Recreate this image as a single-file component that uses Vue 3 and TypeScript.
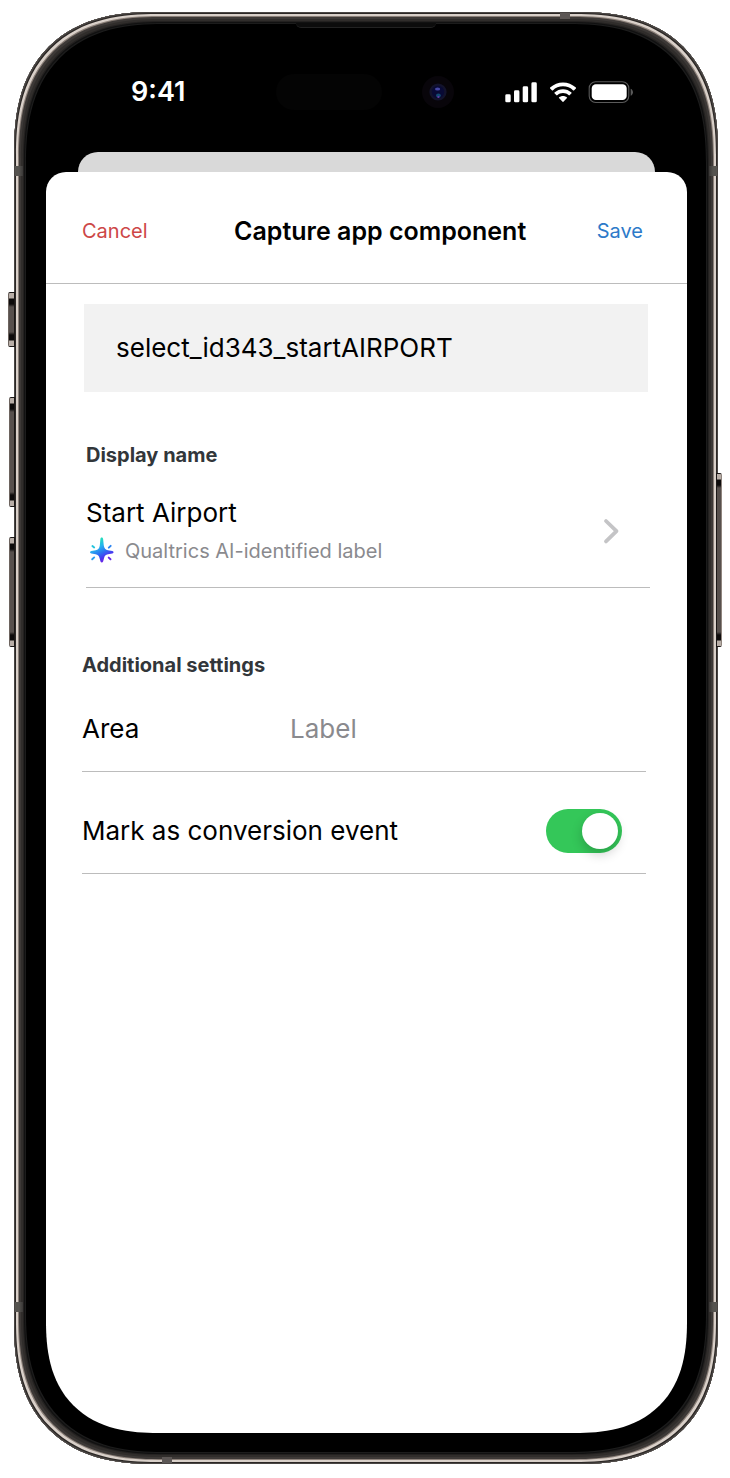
<script setup lang="ts">
import { ref } from 'vue'

const componentId = 'select_id343_startAIRPORT'
const displayName = ref<string>('Start Airport')
const area = ref<string>('')
const isConversion = ref<boolean>(true)
</script>

<template>
  <div class="page">
    <div class="phone">
      <span class="key key-action"></span>
      <span class="key key-up"></span>
      <span class="key key-down"></span>
      <span class="key key-power"></span>
      <span class="band band-left-top"></span>
      <span class="band band-right-top"></span>
      <span class="band band-left-bottom"></span>
      <span class="band band-right-bottom"></span>
      <span class="band band-top"></span>
      <span class="band band-bottom"></span>
      <span class="speaker"></span>

      <div class="status">
        <span class="time">9:41</span>
        <div class="island">
          <span class="pill"></span>
          <svg class="camera" viewBox="0 0 32 32" aria-hidden="true">
            <circle cx="16" cy="16" r="16" fill="#08050a" />
            <circle cx="16" cy="16" r="8.6" fill="#13132c" />
            <circle cx="16" cy="16" r="6.2" fill="#090a35" />
            <ellipse cx="15.6" cy="13" rx="2.6" ry="1.6" fill="#4647a4" />
            <ellipse cx="16.4" cy="19.6" rx="2.4" ry="2" fill="#124a72" />
            <circle cx="16.4" cy="21" r="1.1" fill="#6a3aa8" />
          </svg>
        </div>
        <svg class="indicators" viewBox="0 0 128 24" aria-hidden="true">
          <g fill="#fff">
            <rect x="0.3" y="14.3" width="5.4" height="8" rx="1.4" />
            <rect x="9" y="10.3" width="5.4" height="12" rx="1.4" />
            <rect x="17.7" y="6.3" width="5.4" height="16" rx="1.4" />
            <rect x="26.4" y="2.3" width="5.4" height="20" rx="1.4" />
            <path d="M58 6.3c3.9 0 7.500 1.500 10.200 4.100.2.200.5.200.7 0l2-2c.2-.2.2-.5 0-.8-7.200-6.900-18.600-6.900-25.800 0-.2.200-.2.600 0 .8l2 2c.2.200.5.200.7 0 2.700-2.600 6.300-4.100 10.200-4.100z" />
            <path d="M58 13c2.100 0 4.200.8 5.800 2.300.2.200.5.200.7 0l2-2c.2-.2.2-.6 0-.8-4.800-4.500-12.200-4.500-17 0-.2.200-.2.600 0 .8l2 2c.2.200.5.200.7 0C53.800 13.800 55.900 13 58 13z" />
            <path d="M62 17.400c.2.200.2.500 0 .7l-3.600 3.600c-.2.300-.6.300-.8 0L54 18.100c-.2-.2-.2-.5 0-.7 2.300-2 5.700-2 8 0z" />
            <rect x="86.700" y="4.300" width="35" height="15.800" rx="4.200" />
          </g>
          <rect x="84.200" y="1.800" width="39.600" height="20.700" rx="6.500" fill="none" stroke="#5a5a5a" stroke-width="1.100" />
          <path d="M125.700 8.700v7c1.400-.6 2.300-2 2.300-3.500s-.9-2.900-2.300-3.500z" fill="#5a5a5a" />
        </svg>
      </div>

      <div class="backdrop"></div>

      <main class="sheet">
        <header class="bar">
          <button type="button" class="action cancel">Cancel</button>
          <h1 class="title">Capture app component</h1>
          <button type="button" class="action save">Save</button>
        </header>

        <div class="identifier">{{ componentId }}</div>

        <section class="display">
          <h2 class="heading">Display name</h2>
          <button type="button" class="name">
            <span class="name-text">
              <span class="value">{{ displayName }}</span>
              <span class="source">
                <svg class="spark" viewBox="0 0 26 28" aria-hidden="true">
                  <defs>
                    <linearGradient id="spark-fill" gradientUnits="userSpaceOnUse" x1="8" y1="3" x2="19" y2="24">
                      <stop offset="0" stop-color="#22e0b8" />
                      <stop offset="0.300" stop-color="#27b4ee" />
                      <stop offset="0.550" stop-color="#2b74f2" />
                      <stop offset="0.780" stop-color="#4a35f0" />
                      <stop offset="1" stop-color="#7a1ee0" />
                    </linearGradient>
                  </defs>
                  <path fill="url(#spark-fill)" d="M12.700.5c.9 0 1.300.7 1.400 1.500l.7 6.500c.4 2.800 1.600 4.200 4.200 4.700l4.300.9c1.700.4 1.700 2 0 2.400l-4.300.7c-2.500.5-3.400 1.500-3.900 3.700l-1 3.500c-.4 1.500-2.200 1.500-2.600 0l-1-3.500c-.5-2.200-1.600-3.300-3.900-3.700l-4.300-.7c-1.700-.4-1.700-2 0-2.400l4.300-.9c2.600-.5 3.800-1.900 4.200-4.700l.6-6.500c.1-.8.4-1.500 1.300-1.500z" />
                  <g fill="none" stroke-width="1.900" stroke-linecap="round">
                    <path stroke="#25c4dd" d="M3.400 9l1.800 1.500" />
                    <path stroke="#2a84f2" d="M21.700 8.800l-1.900 1.900" />
                    <path stroke="#2a9df0" d="M3.200 22.300l2-1.900" />
                    <path stroke="#6a26e6" d="M21.500 22.300l-1.800-1.700" />
                  </g>
                </svg>
                Qualtrics AI-identified label
              </span>
            </span>
            <svg class="chevron" viewBox="0 0 18 28" aria-hidden="true">
              <path d="M4 4l10.500 10.200-10.500 10.200" fill="none" stroke="#c4c4c6" stroke-width="3.800" stroke-linecap="round" stroke-linejoin="round" />
            </svg>
          </button>
        </section>

        <section class="settings">
          <h2 class="heading">Additional settings</h2>
          <div class="row">
            <label class="area-label" for="area">Area</label>
            <input id="area" v-model="area" class="area-input" type="text" placeholder="Label" />
          </div>
          <div class="row">
            <label for="conversion">Mark as conversion event</label>
            <input id="conversion" v-model="isConversion" class="switch" type="checkbox" role="switch" />
          </div>
        </section>
      </main>
    </div>
  </div>
</template>

<style>
body {
  background: #fff;
}
</style>

<style scoped>
.page {
  box-sizing: border-box;
  min-height: 100vh;
  padding: 12px 12px 14px 14px;
  display: flex;
  font-family: Inter, "Liberation Sans", sans-serif;
  color: #000;
}

.phone {
  position: relative;
  box-sizing: border-box;
  flex: 1;
  min-width: 0;
  display: flex;
  flex-direction: column;
  padding: 0 31px 31px 32px;
  border-radius: 122px;
  background: #000;
  box-shadow:
    inset 0 0 0 1px #4a4644,
    inset 0 0 0 2px #2b2725,
    inset 0 0 0 4px #d9d0c9,
    inset 0 0 0 5px #8a7f78,
    inset 0 0 0 7px #3d3937,
    inset 0 0 0 9px #302d2b,
    inset 0 0 0 10px #232120,
    inset 0 0 0 11px #111,
    inset 0 0 0 12px #1c1c1c;
}

.key {
  position: absolute;
  box-sizing: border-box;
  left: -5px;
  width: 6px;
  height: 110px;
  border: 1px solid #1a1716;
  border-left-color: #6d645f;
  border-radius: 2px 0 0 2px;
  background: linear-gradient(#b8aea7 0 5px, #0d0b0b 6px 11px, #57504d 14px calc(100% - 14px), #0d0b0b calc(100% - 11px) calc(100% - 6px), #b8aea7 calc(100% - 5px));
}

.key-action {
  top: 280px;
  left: -6px;
  width: 7px;
  height: 55px;
}

.key-up {
  top: 385px;
}

.key-down {
  top: 525px;
}

.key-power {
  top: 461px;
  left: auto;
  right: -4px;
  height: 174px;
  border-left-color: #1a1716;
  border-right-color: #8f857e;
  border-radius: 0 2px 2px 0;
}

.band {
  position: absolute;
  width: 8px;
  height: 10px;
  background: linear-gradient(to right, #55534f 0 4px, #3a3837);
}

.band-left-top {
  top: 154px;
  left: 1px;
}

.band-right-top {
  top: 154px;
  right: 1px;
  background: linear-gradient(to left, #55534f 0 4px, #3a3837);
}

.band-left-bottom {
  bottom: 152px;
  left: 1px;
}

.band-right-bottom {
  bottom: 152px;
  right: 1px;
  background: linear-gradient(to left, #55534f 0 4px, #3a3837);
}

.band-top {
  top: 1px;
  right: 148px;
  width: 10px;
  height: 6px;
  background: #5c5755;
}

.band-bottom {
  bottom: 1px;
  left: 148px;
  width: 10px;
  height: 6px;
  background: #5c5755;
}

.speaker {
  position: absolute;
  top: 11px;
  left: 40%;
  width: 20%;
  height: 5px;
  border-bottom: 1px solid #222;
  border-radius: 0 0 5px 5px;
  box-sizing: border-box;
  background: #0c0c0c;
}

.status {
  box-sizing: border-box;
  height: 140px;
  padding: 20px 54px 0 85px;
  display: flex;
  align-items: center;
}

.time {
  flex: 1;
  color: #fff;
  font-size: 27px;
  line-height: 32px;
  font-weight: 600;
}

.island {
  display: flex;
  align-items: center;
  gap: 40px;
  margin-right: 51px;
}

.pill {
  width: 106px;
  height: 36px;
  border-radius: 18px;
  background: #040404;
}

.camera {
  width: 32px;
  height: 32px;
}

.indicators {
  width: 128px;
  height: 24px;
}

.backdrop {
  height: 20px;
  margin: 0 32px;
  border-radius: 20px 20px 0 0;
  background: #d9d9d9;
}

.sheet {
  flex: 1;
  border-radius: 20px 20px 94px 94px;
  background: #fff;
  font-size: 26px;
  line-height: 36px;
}

@supports (corner-shape: superellipse(1.3)) {
  .phone {
    border-radius: 142px;
    corner-shape: superellipse(1.3);
  }

  .sheet {
    border-radius: 20px 20px 112px 112px;
    corner-shape: round round superellipse(1.3) superellipse(1.3);
  }
}

.bar {
  box-sizing: border-box;
  height: 112px;
  padding: 6px 44px 0 36px;
  display: flex;
  align-items: center;
  border-bottom: 1px solid #bcbcbc;
}

.action {
  padding: 0;
  border: 0;
  background: none;
  font-family: inherit;
  font-size: 20px;
  line-height: 28px;
}

.cancel {
  color: #cd4747;
}

.save {
  color: #2d7ac9;
}

.title {
  flex: 1;
  margin: 0;
  padding-left: 16px;
  font-size: 25px;
  line-height: 32px;
  font-weight: 600;
  text-align: center;
}

.identifier {
  margin: 20px 39px 0 38px;
  padding: 26px 32px;
  background: #f2f2f2;
}

.display {
  padding: 51px 37px 0 40px;
}

.settings {
  padding: 65px 41px 94px 36px;
}

.heading {
  margin: 0;
  font-size: 20px;
  line-height: 24px;
  font-weight: 700;
  color: #32363a;
}

.name {
  width: 100%;
  margin-top: 28px;
  padding: 0 30px 20px 0;
  display: flex;
  align-items: center;
  justify-content: space-between;
  border: 0;
  border-bottom: 1px solid #bcbcbc;
  background: none;
  font: inherit;
  color: inherit;
  text-align: left;
}

.name-text {
  display: flex;
  flex-direction: column;
  gap: 8px;
  padding-bottom: 4px;
}

.source {
  display: flex;
  align-items: center;
  gap: 10px;
  padding-left: 3px;
  font-size: 20px;
  line-height: 24px;
  color: #8a8a8e;
}

.spark {
  width: 26px;
  height: 28px;
  margin: -2px 0;
}

.chevron {
  width: 18px;
  height: 28px;
}

.row {
  box-sizing: border-box;
  height: 86px;
  margin-top: 16px;
  display: flex;
  align-items: center;
  justify-content: space-between;
  border-bottom: 1px solid #bcbcbc;
}

.heading + .row {
  margin-top: 9px;
}

.area-label {
  width: 208px;
}

.area-input {
  flex: 1;
  min-width: 0;
  padding: 0;
  border: 0;
  outline: 0;
  background: none;
  font: inherit;
  color: inherit;
}

.area-input::placeholder {
  color: #8a8a8e;
  opacity: 1;
}

.switch {
  appearance: none;
  box-sizing: border-box;
  width: 76px;
  height: 44px;
  margin: 0 24px 0 0;
  padding: 4px;
  display: flex;
  border-radius: 22px;
  background: #d1d1d6;
}

.switch::before {
  content: "";
  width: 36px;
  height: 36px;
  border-radius: 50%;
  background: #fff;
  box-shadow: 0 5px 12px rgba(0, 0, 0, 0.200);
}

.switch:checked {
  justify-content: flex-end;
  background: #34c759;
}
</style>
